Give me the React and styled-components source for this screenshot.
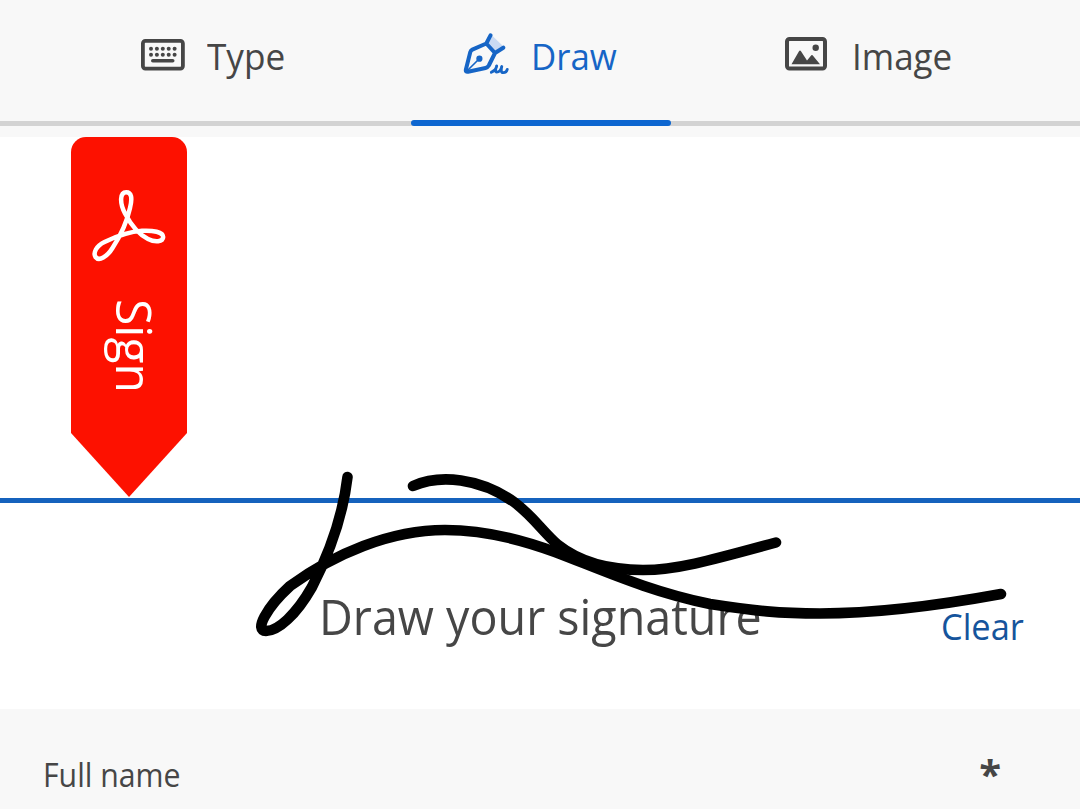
import React from 'react';
import styled, { createGlobalStyle } from 'styled-components';

const GlobalStyle = createGlobalStyle`
    body {
        margin: 0;
        background-color: #f8f8f8;
        font-family: 'Open Sans', 'Noto Sans', sans-serif;
        color: #464646;
    }
`;

const Wrapper = styled.div`
    display: flex;
    flex-direction: column;
    width: 1080px;
    height: 809px;
    overflow: hidden;
    background-color: #f8f8f8;
`;

const TabList = styled.nav`
    display: grid;
    grid-template-columns: 411px 260px 409px;
    height: 126px;
    margin-bottom: 11px;
`;

const Tab = styled.button`
    position: relative;
    display: flex;
    align-items: flex-start;
    box-sizing: border-box;
    height: 126px;
    padding: 0 0 0 ${props => props.$indent}px;
    border: 0;
    background: linear-gradient(#d3d3d3, #d3d3d3) bottom / 100% 5px no-repeat;
    color: ${props => (props.$active ? '#1665c6' : '#464646')};
    font-family: inherit;
    text-align: left;

    ${props => props.$active && `
        &::after {
            content: '';
            position: absolute;
            right: 0;
            bottom: 0;
            left: 0;
            height: 6px;
            border-radius: 3px;
            background-color: #0d66d0;
        }
    `}

    svg {
        flex: none;
        margin-top: 33px;
        margin-right: ${props => props.$gap}px;
    }
`;

const Label = styled.span`
    display: block;
    flex: none;
    font-size: ${props => props.$size}px;
    line-height: ${props => props.$size * 1.4}px;
    white-space: nowrap;
    transform: scaleX(${props => props.$stretch || 1});
    transform-origin: left center;
`;

const TabLabel = styled(Label)`
    margin-top: 30px;
`;

const Pad = styled.main`
    position: relative;
    display: flex;
    flex-direction: column;
    height: 572px;
    background-color: #fff;
`;

const SignArea = styled.div`
    box-sizing: border-box;
    height: 366px;
    padding-left: 71px;
    border-bottom: 5px solid #1562bd;
`;

const Ribbon = styled.div`
    display: flex;
    flex-direction: column;
    width: 116px;
    height: 360px;
    border-radius: 15px 15px 0 0;
    background-color: #fd1100;
    clip-path: polygon(0 0, 100% 0, 100% 296px, 50% 100%, 0 296px);
    color: #fff;

    svg {
        margin: 51px 0 0 20px;
    }
`;

const RibbonText = styled.span`
    margin: 35px 0 0 30px;
    font-size: 50px;
    line-height: 68px;
    writing-mode: vertical-rl;
    transform: scaleY(0.96);
    transform-origin: center top;
    align-self: flex-start;
`;

const PromptRow = styled.div`
    display: flex;
    align-items: flex-start;
    justify-content: space-between;
    padding: 78px 55px 0 319px;
`;

const Prompt = styled(Label)`
    width: 450px;
`;

const Clear = styled(Label)`
    width: 84px;
    margin-top: 19px;
    color: #15549c;
`;

const Ink = styled.svg`
    position: absolute;
    top: 0;
    left: 0;
    fill: none;
    stroke: #000;
    stroke-width: 10.6;
    stroke-linecap: round;
    stroke-linejoin: round;
`;

const Field = styled.footer`
    display: flex;
    justify-content: space-between;
    padding: 44px 79px 0 43px;
`;

const Required = styled.span`
    margin-top: -6px;
    font-size: 40px;
    font-weight: 700;
    line-height: 54px;
`;

const strokes = [
  'M347.5 477C343 515 330 552 312 587C296 615 278 631 266 631C254 631 266 608 290 586C334 554 390 530 445 530C482 530 520 539 555 552C600 569 650 592 710 604C755 611 780 613.5 820 613.5C875 613.5 930 607 1001 594',
  'M413 486C440 474 480 478 514 502C533 516 542 531 558 545C582 564 612 570 643 570C675 570 705 562 776 542.5',
];

const KeyboardIcon = () => (
  <svg width="44" height="42" viewBox="0 0 44 42" fill="currentColor">
    <rect x="1.9" y="7.9" width="40" height="27.7" rx="2.5" fill="none" stroke="currentColor" strokeWidth="3.8" />
    {[10, 15.9, 21.8, 27.7, 33.6].map(x => (
      <g key={x}>
        <circle cx={x} cy="15.7" r="2" />
        <circle cx={x} cy="21.7" r="2" />
      </g>
    ))}
    <rect x="10" y="26" width="23.5" height="3.6" rx="1.8" />
  </svg>
);

const PenIcon = () => (
  <svg width="46" height="44" viewBox="0 0 46 44" fill="none" stroke="currentColor" strokeWidth="4" strokeLinecap="round" strokeLinejoin="round">
    <path d="M28 1.5 41 14l-8 6-9-9z" fill="#c9daf3" stroke="none" />
    <path d="M27.5 2.3 23.3 10.5 9.3 16.6Q7.8 17.3 7.3 19L2.9 36.5Q2.3 39.2 5 38.8L22.5 35Q24.6 34.5 25.8 32.5L32 20 23.3 10.5M32 20l8.3-5.3" />
    <path d="M3.7 38.2 16 26" strokeWidth="1.6" />
    <circle cx="16.4" cy="25.7" r="3.1" fill="currentColor" stroke="none" />
    <path d="M28.3 39.3C31 38 33.4 35.500 33.700 33C32.500 36 32 39.200 33.800 39.200C36 39.200 38 36.500 38.800 33.500C37.900 37 38 39.700 40.200 39.700C42.300 39.700 43.900 38.200 44.300 36.300" strokeWidth="2.8" />
  </svg>
);

const ImageIcon = () => (
  <svg width="42" height="42" viewBox="0 0 42 42" fill="currentColor">
    <rect x="2" y="6" width="38" height="29.5" rx="2.5" fill="none" stroke="currentColor" strokeWidth="4" />
    <path d="M6.5 31.200 14 18.200Q15 16.600 16 18.200L22 27.500l3.700-4.600q1.300-1.600 2.500 0L35 31.200z" />
    <circle cx="30.700" cy="14.800" r="3.200" />
  </svg>
);

const AcrobatIcon = () => (
  <svg width="76" height="76" viewBox="0 0 76 76" fill="none" stroke="currentColor" strokeWidth="4.5" strokeLinecap="round" strokeLinejoin="round">
    <path d="M35.2 4.2C28.8 4.2 28.5 15 34 25.500C39 35 47 46 57 51C64 54.500 72 54 72.200 49C72 44 62 42.200 51 42.800C41 43.500 25 48.500 13.500 54C5 58 2 65 4.500 69C8 73.500 16 69 21.500 60C28 50 35.500 36 39 20C41.500 10 40.500 4.200 35.200 4.200z" />
  </svg>
);

export default function App() {
  return (
    <Wrapper>
      <GlobalStyle />
      <TabList>
        <Tab $indent={141} $gap={22}>
          <KeyboardIcon />
          <TabLabel $size={37} $stretch={0.95}>Type</TabLabel>
        </Tab>
        <Tab $active $indent={52} $gap={22}>
          <PenIcon />
          <TabLabel $size={37} $stretch={0.94}>Draw</TabLabel>
        </Tab>
        <Tab $indent={114} $gap={25}>
          <ImageIcon />
          <TabLabel $size={37} $stretch={0.945}>Image</TabLabel>
        </Tab>
      </TabList>
      <Pad>
        <SignArea>
          <Ribbon>
            <AcrobatIcon />
            <RibbonText>Sign</RibbonText>
          </Ribbon>
        </SignArea>
        <PromptRow>
          <Prompt $size={50} $stretch={0.933}>Draw your signature</Prompt>
          <Clear $size={37} $stretch={0.93}>Clear</Clear>
        </PromptRow>
        <Ink width="1080" height="572" viewBox="0 137 1080 572">
          {strokes.map(d => <path key={d} d={d} />)}
        </Ink>
      </Pad>
      <Field>
        <Label $size={32} $stretch={0.945}>Full name</Label>
        <Required>*</Required>
      </Field>
    </Wrapper>
  );
}
